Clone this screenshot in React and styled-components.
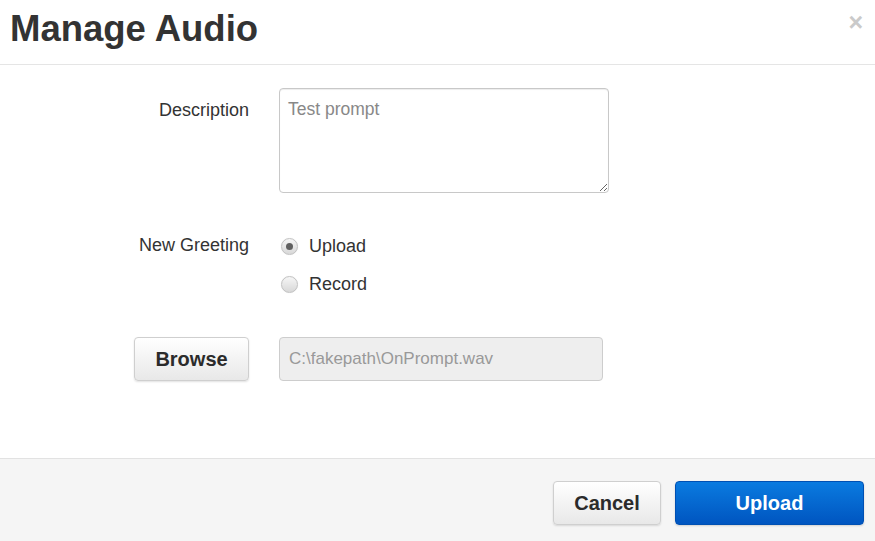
import styled, { createGlobalStyle } from "styled-components";

const GlobalStyle = createGlobalStyle`
  html, body {
    margin: 0;
    padding: 0;
    background: #ffffff;
  }
  body {
    font-family: "Liberation Sans", Arial, sans-serif;
    color: #333;
  }
`;

export default function App() {
  return (
    <>
      <GlobalStyle />
      <Modal>
        <Header>
          <Title>Manage Audio</Title>
          <Close>×</Close>
        </Header>
        <Body>
          <Label>Description</Label>
          <TextArea defaultValue="Test prompt" />

          <Label $top={8}>New Greeting</Label>
          <RadioGroup>
            <RadioRow>
              <Radio $checked />
              <RadioText>Upload</RadioText>
            </RadioRow>
            <RadioRow>
              <Radio />
              <RadioText>Record</RadioText>
            </RadioRow>
          </RadioGroup>

          <BrowseButton>Browse</BrowseButton>
          <FileInput disabled value="C:\fakepath\OnPrompt.wav" readOnly />
        </Body>
        <Footer>
          <Button>Cancel</Button>
          <Button $primary $width={189}>Upload</Button>
        </Footer>
      </Modal>
    </>
  );
}

const Modal = styled.div`
  width: 875px;
  height: 541px;
  display: flex;
  flex-direction: column;
`;

const Header = styled.div`
  height: 65px;
  box-sizing: border-box;
  border-bottom: 1px solid #e5e5e5;
  padding: 0 12px 0 10px;
  display: flex;
  align-items: center;
  justify-content: space-between;
`;

const Title = styled.h3`
  margin: 0;
  font-size: 36.5px;
  font-weight: bold;
  color: #333;
  line-height: 1;
  margin-top: -6px;
`;

const Close = styled.span`
  font-size: 25px;
  font-weight: bold;
  color: #cacaca;
  line-height: 1;
  margin-top: -19px;
`;

const Body = styled.div`
  flex: 1;
  display: grid;
  grid-template-columns: 249px 1fr;
  column-gap: 30px;
  row-gap: 34px;
  align-content: start;
  padding-top: 23px;
`;

const Label = styled.div`
  justify-self: end;
  font-size: 18px;
  color: #333;
  padding-top: ${(p) => p.$top ?? 12}px;
`;

const TextArea = styled.textarea`
  width: 330px;
  height: 105px;
  box-sizing: border-box;
  border: 1px solid #c8c8c8;
  border-radius: 4px;
  padding: 10px 8px;
  font-family: "Liberation Sans", Arial, sans-serif;
  font-size: 17.5px;
  color: #888;
  box-shadow: inset 0 1px 1px rgba(0, 0, 0, 0.075);
  outline: none;
  resize: both;
`;

const RadioGroup = styled.div`
  display: flex;
  flex-direction: column;
`;

const RadioRow = styled.label`
  display: flex;
  align-items: center;
  height: 38px;
  gap: 11px;
  padding-left: 2px;
`;

const Radio = styled.span`
  width: 17px;
  height: 17px;
  box-sizing: border-box;
  border-radius: 50%;
  border: 1px solid #c2c2c2;
  background: linear-gradient(#f6f6f6, #d8d8d8);
  box-shadow: 0 0 1px rgba(0, 0, 0, 0.1);
  display: flex;
  align-items: center;
  justify-content: center;

  &::after {
    content: "";
    width: 7px;
    height: 7px;
    border-radius: 50%;
    background: #606060;
    display: ${(p) => (p.$checked ? "block" : "none")};
  }
`;

const RadioText = styled.span`
  font-size: 18px;
  color: #333;
`;

const Button = styled.button`
  height: 44px;
  width: ${(p) => p.$width ?? 108}px;
  box-sizing: border-box;
  border-radius: 4px;
  font-family: "Liberation Sans", Arial, sans-serif;
  font-size: 20px;
  font-weight: bold;
  cursor: pointer;
  color: ${(p) => (p.$primary ? "#fff" : "#2b2b2b")};
  border: 1px solid ${(p) => (p.$primary ? "#0050b3" : "#cfcfcf")};
  background: ${(p) =>
    p.$primary
      ? "linear-gradient(#0a7be0, #0055c0)"
      : "linear-gradient(#ffffff, #e8e8e8)"};
  box-shadow: ${(p) =>
    p.$primary ? "0 1px 2px rgba(0,0,0,0.15)" : "0 1px 2px rgba(0,0,0,0.12)"};
`;

const BrowseButton = styled(Button)`
  justify-self: end;
  width: 115px;
`;

const FileInput = styled.input`
  width: 324px;
  height: 44px;
  box-sizing: border-box;
  border: 1px solid #cdcdcd;
  border-radius: 4px;
  background: #eeeeee;
  padding: 0 9px;
  font-family: "Liberation Sans", Arial, sans-serif;
  font-size: 17px;
  color: #999;
`;

const Footer = styled.div`
  height: 83px;
  box-sizing: border-box;
  background: #f5f5f5;
  border-top: 1px solid #e2e2e2;
  display: flex;
  align-items: flex-start;
  justify-content: flex-end;
  gap: 14px;
  padding: 22px 11px 0 0;
`;
